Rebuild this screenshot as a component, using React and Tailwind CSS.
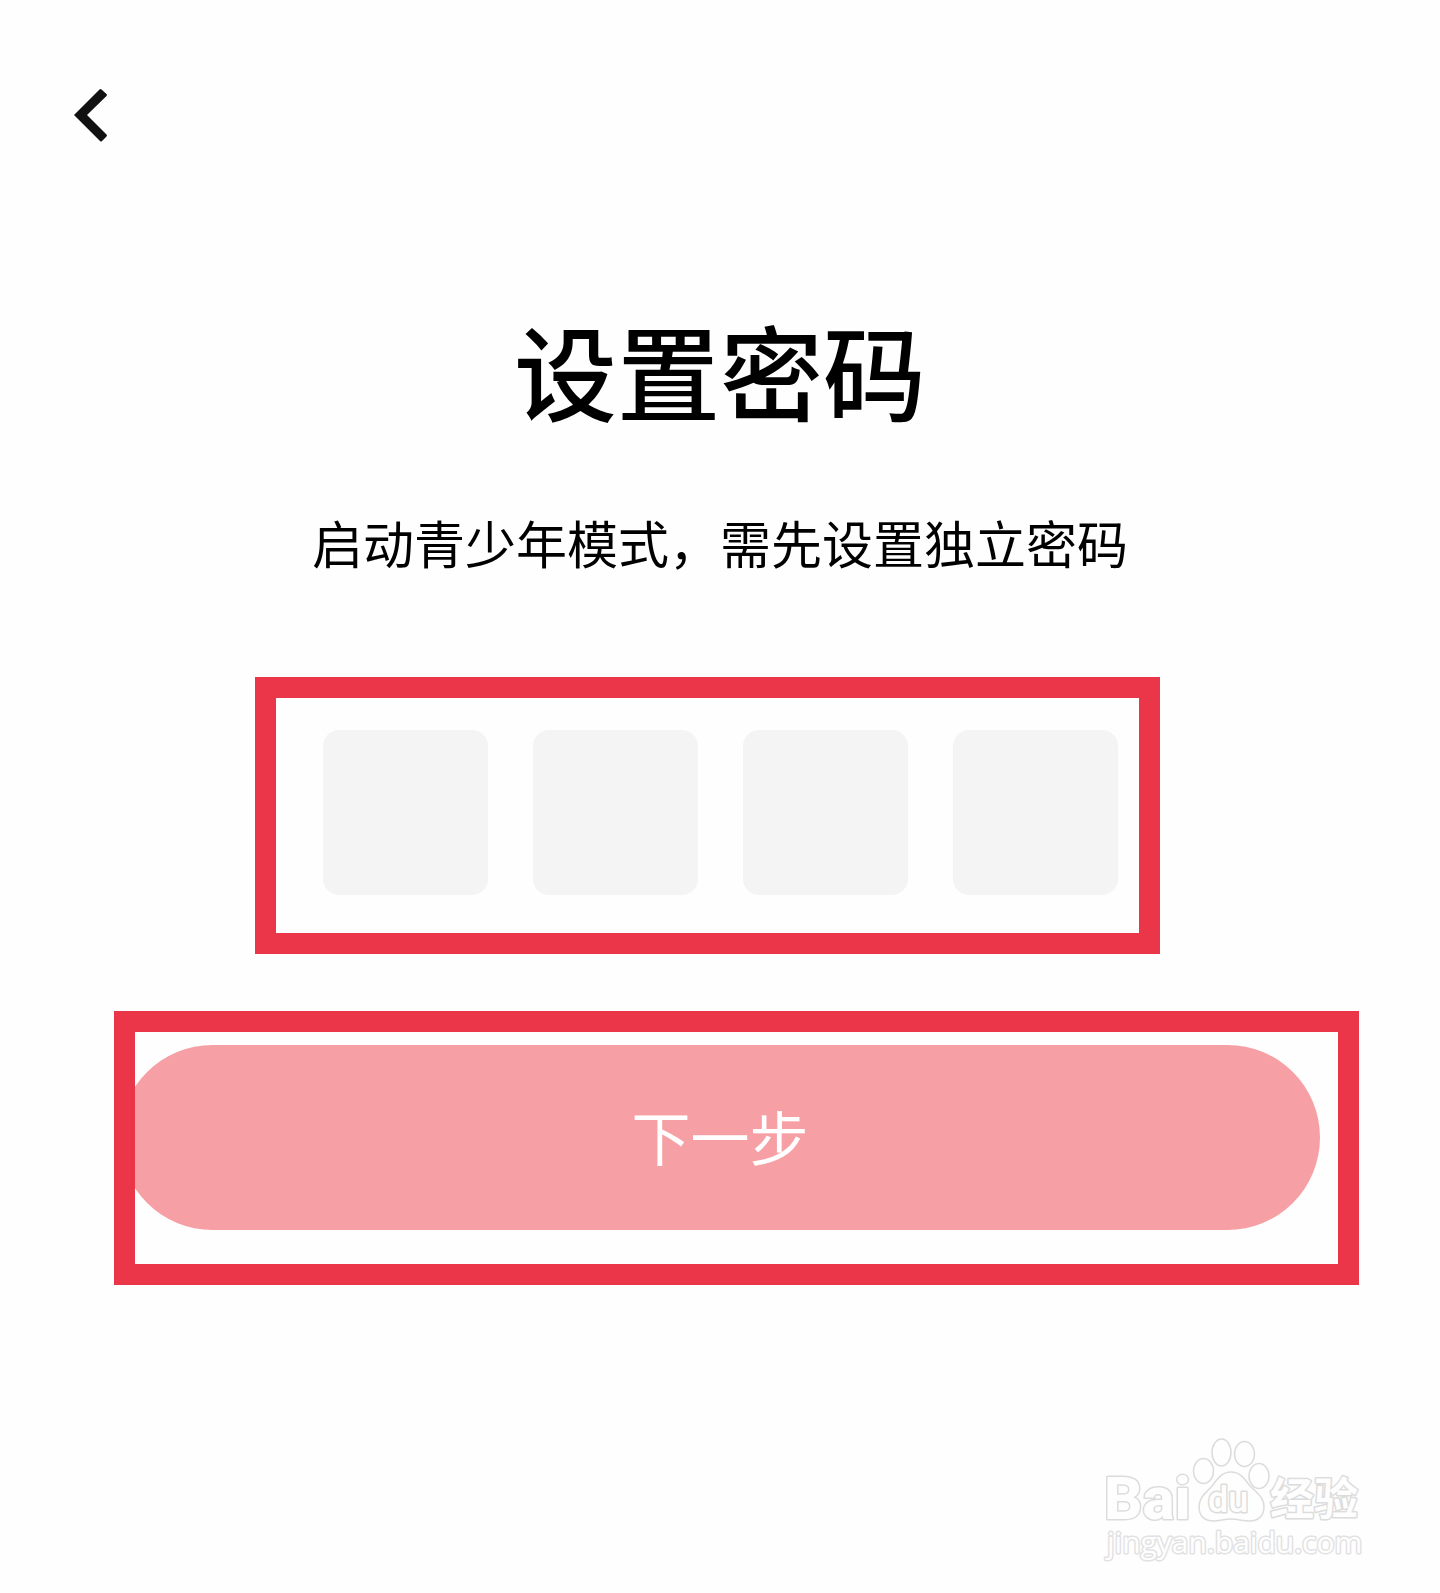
const cjk = "font-['Noto_Sans_CJK_SC',sans-serif]";

function BackIcon() {
  return (
    <svg viewBox="0 0 34 54" className="h-[54px] w-[34px]" aria-hidden="true">
      <path
        d="M0 27 25.500 1.500Q26.500 .6 27.500 1.500L32.500 6Q33.500 7 32.500 8L13 27 32.500 46.500Q33.500 47.500 32.500 48.500L28 53Q27 54 26 53Z"
        fill="#111"
      />
    </svg>
  );
}

function PinBoxes() {
  return (
    <div className="relative mt-[162px] flex gap-[45px]">
      {[1, 2, 3, 4].map((n) => (
        <input
          key={n}
          type="password"
          inputMode="numeric"
          maxLength={1}
          aria-label={`密码第${n}位`}
          className="size-[165px] rounded-2xl bg-[#f4f4f4] text-center text-6xl outline-none"
        />
      ))}
      <div className="pointer-events-none absolute -top-[53px] -right-[42px] -bottom-[59px] -left-[68px] border-[21px] border-[#eb3549]" />
    </div>
  );
}

function Watermark() {
  const outline = { fill: "#fefefe", stroke: "#dcdcdc", strokeWidth: 3, paintOrder: "stroke", strokeLinejoin: "round" };
  return (
    <svg viewBox="0 0 300 150" className="h-[150px] w-[300px]" role="img" aria-label="Baidu 经验">
      <g fill="#fefefe" stroke="#dcdcdc" strokeWidth="1.5">
        <ellipse cx="141.500" cy="32.500" rx="9.500" ry="13.500" />
        <ellipse cx="164.500" cy="34" rx="10" ry="12.500" />
        <ellipse cx="123.500" cy="51" rx="10" ry="12.500" />
        <ellipse cx="179" cy="56" rx="10" ry="12.500" />
      </g>
      <text x="24" y="99" fontSize="60" fontWeight="800" fontFamily="Roboto, sans-serif" {...outline}>Bai</text>
      <path
        d="M151 52C161 52 165 60 170 66C176 72 184 77 184 87C184 96 178 101 170 101C162 101 158 99 151 99C144 99 140 101 133 101C125 101 119 96 119 87C119 77 127 72 132 66C137 60 141 52 151 52Z"
        fill="#fefefe"
        stroke="#dcdcdc"
        strokeWidth="1.5"
      />
      <text x="128" y="92" fontSize="36" fontWeight="500" fontFamily="Roboto, sans-serif" {...outline}>du</text>
      <text x="190" y="95" fontSize="44" fontWeight="700" fontFamily="'Noto Sans CJK SC', sans-serif" {...outline}>经验</text>
      <text x="27" y="133" fontSize="30" fontFamily="'Open Sans', sans-serif" {...outline} stroke="#e2e2e2">jingyan.baidu.com</text>
    </svg>
  );
}

export default function App() {
  return (
    <div className={`${cjk} flex min-h-screen flex-col bg-[#fefefe] text-black`}>
      <header className="flex pt-[88px] pl-[74px]">
        <button type="button" aria-label="返回">
          <BackIcon />
        </button>
      </header>
      <main className="flex flex-col items-center px-[120px] pt-44">
        <h1 className="text-[103px] leading-[104px] font-medium">设置密码</h1>
        <p className="mt-[94px] text-[51px] leading-[52px]">启动青少年模式，需先设置独立密码</p>
        <PinBoxes />
        <div className="relative mt-[150px] w-full">
          <button
            type="button"
            className="h-[185px] w-full rounded-full bg-[#f6a0a5] pb-1 text-[59px] leading-[60px] text-white"
          >
            下一步
          </button>
          <div className="pointer-events-none absolute -top-[34px] -right-[39px] -bottom-[55px] -left-[6px] border-[21px] border-[#eb3549]" />
        </div>
      </main>
      <footer className="mt-auto flex justify-end pr-[60px] pb-[23px]">
        <Watermark />
      </footer>
    </div>
  );
}
